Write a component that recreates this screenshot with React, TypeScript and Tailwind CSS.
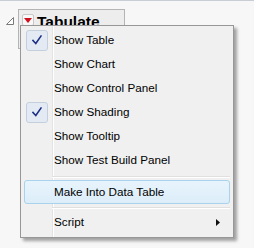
import React from 'react';

type Item = { label: string; checked?: boolean; active?: boolean; submenu?: boolean };

const groupA: Item[] = [
  { label: 'Show Table', checked: true },
  { label: 'Show Chart' },
  { label: 'Show Control Panel' },
  { label: 'Show Shading', checked: true },
  { label: 'Show Tooltip' },
  { label: 'Show Test Build Panel' },
];

function Check() {
  return (
    <svg width="12" height="12" viewBox="0 0 12 12">
      <path d="M2 6.5 L4.8 9.5 L10 2" fill="none" stroke="#1c2f86" strokeWidth="1.6" strokeLinecap="square" />
    </svg>
  );
}

function Row({ item }: { item: Item }) {
  return (
    <div
      className={`relative flex items-center h-[24px] mx-[3px] rounded-[3px] border ${
        item.active ? 'border-[#a9d2ec] bg-gradient-to-b from-[#e8f4fc] to-[#dcedf9]' : 'border-transparent'
      }`}
    >
      <div className="w-[26px] h-full flex items-center justify-start pl-[1px]">
        {item.checked && (
          <div className="w-[22px] h-[21px] rounded-[3px] border border-[#c3cfdd] bg-[#e3eaf3] flex items-center justify-center">
            <Check />
          </div>
        )}
      </div>
      <span className="pl-[3px] flex-1">{item.label}</span>
      {item.submenu && (
        <svg width="4" height="7" viewBox="0 0 4 7" className="mr-[9px]">
          <path d="M0 0 L4 3.5 L0 7 Z" fill="#111" />
        </svg>
      )}
    </div>
  );
}

function Separator({ h, top }: { h: string; top: string }) {
  return (
    <div className={`relative ${h}`}>
      <div className={`absolute left-[31px] right-[3px] ${top} h-px bg-[#e0e0e0]`} />
      <div className={`absolute left-[31px] right-[3px] ${top} mt-px h-px bg-white`} />
    </div>
  );
}

export default function App() {
  return (
    <div
      className="relative w-[254px] h-[248px] bg-[#f7f7f7] border-t border-[#c9cdd6] overflow-hidden"
      style={{ fontFamily: '"Liberation Sans", Arial, sans-serif' }}
    >
      {/* header */}
      <div className="flex items-start pt-[8px] pl-[6px]">
        <svg width="8" height="8" viewBox="0 0 8 8" className="mt-[8px]">
          <path d="M7.5 0.5 L7.5 7.5 L0.5 7.5 Z" fill="#fff" stroke="#7a7a7a" strokeWidth="1" />
        </svg>
        <div className="ml-[4px] w-[107px] h-[40px] border border-[#b4b4b4] bg-[#ededed] flex items-start pt-[4px] pl-[3px]">
          <div className="w-[12px] h-[12px] rounded-[2px] border border-[#c8c8c8] bg-[#f8f8f8] flex items-center justify-center">
            <svg width="8" height="5" viewBox="0 0 8 5">
              <path d="M0 0 L8 0 L4 5 Z" fill="#d0101c" />
            </svg>
          </div>
          <span className="ml-[3px] mt-[1px] text-[15.5px] leading-[14px] font-bold text-black">Tabulate</span>
        </div>
      </div>

      {/* context menu */}
      <div className="absolute left-[20px] top-[24px] w-[214px] bg-[#f0f0f0] border border-[#979797] pt-[2px] pb-[3px] text-[11.7px] text-black shadow-[3px_3px_3px_rgba(0,0,0,0.35)]">
        <div className="absolute left-[31px] top-0 bottom-0 w-px bg-[#e2e3e3]" />
        <div className="absolute left-[32px] top-0 bottom-0 w-px bg-white" />
        {groupA.map((it) => (
          <Row key={it.label} item={it} />
        ))}
        <Separator h="h-[8px]" top="top-[4px]" />
        <Row item={{ label: 'Make Into Data Table', active: true }} />
        <Separator h="h-[6px]" top="top-[3px]" />
        <Row item={{ label: 'Script', submenu: true }} />
      </div>
    </div>
  );
}
